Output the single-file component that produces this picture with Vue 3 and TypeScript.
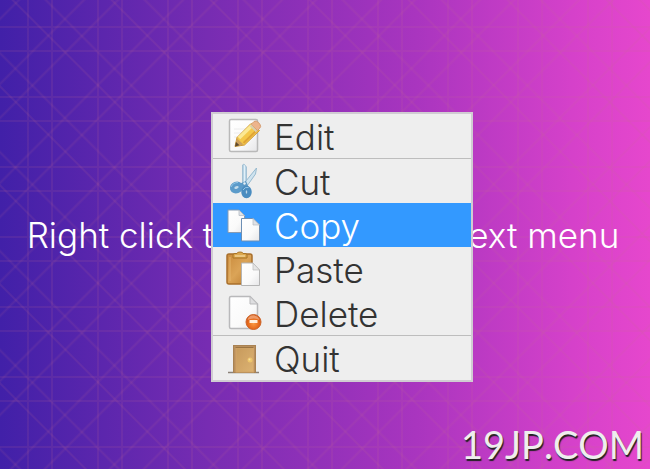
<script setup lang="ts">
import { ref } from 'vue'

type IconName = 'edit' | 'cut' | 'copy' | 'paste' | 'delete' | 'quit'

interface MenuItem {
  icon: IconName
  label: string
}

const groups: MenuItem[][] = [
  [{ icon: 'edit', label: 'Edit' }],
  [
    { icon: 'cut', label: 'Cut' },
    { icon: 'copy', label: 'Copy' },
    { icon: 'paste', label: 'Paste' },
    { icon: 'delete', label: 'Delete' },
  ],
  [{ icon: 'quit', label: 'Quit' }],
]

const active = ref<IconName>('copy')
</script>

<template>
  <main class="stage">
    <svg class="weave" aria-hidden="true">
      <defs>
        <pattern id="grid" width="70" height="70" patternUnits="userSpaceOnUse">
          <path d="M28 0V70M52 0V70M0 27H70M0 51H70" class="thread" />
        </pattern>
        <pattern id="rising" width="70" height="70" patternUnits="userSpaceOnUse" patternTransform="rotate(45)">
          <path d="M13.4 0V70M59.4 0V70" class="thread" />
        </pattern>
        <pattern id="falling" width="70" height="70" patternUnits="userSpaceOnUse" patternTransform="rotate(-45)">
          <path d="M9 0V70M32.4 0V70" class="thread" />
        </pattern>
      </defs>
      <rect width="100%" height="100%" fill="url(#grid)" />
      <rect width="100%" height="100%" fill="url(#rising)" />
      <rect width="100%" height="100%" fill="url(#falling)" />
    </svg>

    <svg class="defs" width="0" height="0" aria-hidden="true">
      <defs>
        <linearGradient id="paper" x1="0" y1="0" x2="1" y2="1">
          <stop offset="0" stop-color="#ffffff" />
          <stop offset="0.6" stop-color="#fafafa" />
          <stop offset="1" stop-color="#e6e6e8" />
        </linearGradient>
        <linearGradient id="wood" x1="0" y1="0" x2="1" y2="1">
          <stop offset="0" stop-color="#c98a3c" />
          <stop offset="0.5" stop-color="#dba457" />
          <stop offset="1" stop-color="#b97a2e" />
        </linearGradient>
        <linearGradient id="panel" x1="0" y1="0" x2="1" y2="1">
          <stop offset="0" stop-color="#c79a5c" />
          <stop offset="1" stop-color="#dcb272" />
        </linearGradient>
        <linearGradient id="steel" x1="0" y1="0" x2="1" y2="0">
          <stop offset="0" stop-color="#8db6d0" />
          <stop offset="0.5" stop-color="#e2f0f8" />
          <stop offset="1" stop-color="#8fb9d4" />
        </linearGradient>
        <radialGradient id="ember" cx="0.5" cy="0.6" r="0.6">
          <stop offset="0" stop-color="#fb9a45" />
          <stop offset="0.6" stop-color="#e66a1c" />
          <stop offset="1" stop-color="#c24d12" />
        </radialGradient>
      </defs>
    </svg>

    <p class="hint">Right click to open the context menu</p>

    <div class="menu" role="menu" aria-label="Context menu">
      <div v-for="(group, index) in groups" :key="index" class="group" role="group">
        <button
          v-for="item in group"
          :key="item.icon"
          type="button"
          role="menuitem"
          class="item"
          :class="{ active: active === item.icon }"
          @mouseenter="active = item.icon"
        >
          <svg class="icon" viewBox="0 0 36 36" aria-hidden="true">
            <g v-if="item.icon === 'edit'">
              <rect x="3.5" y="1.5" width="28" height="32" rx="1.5" fill="url(#paper)" stroke="#b9b9b9" stroke-width="1.5" />
              <path d="M8 11H24M8 15H20M8 19H17" stroke="#ececec" />
              <path d="M9 28.5L11 19.5L25 5.5L33.5 12.5L18.5 27Z" fill="#f4c84a" stroke="#cf9a38" />
              <path d="M13 20L26.5 7" stroke="#fbe994" stroke-width="3.5" />
              <path d="M17.5 25L31 12" stroke="#e0a435" stroke-width="2" />
              <path d="M25 6.5L28 3.5Q30 2 32.5 4.5L34 6.5Q35.5 8.5 33.5 10.5L31.5 12.5Z" fill="#edb48c" stroke="#d49c70" />
              <path d="M24.5 7.5L30.5 13.5" stroke="#d9cfae" stroke-width="2" />
              <path d="M9 28.5L11 20.5L17.5 26.5Z" fill="#cda15c" />
              <path d="M9 28.5L10 24L13.5 27.3Z" fill="#5d4a30" />
            </g>
            <g v-else-if="item.icon === 'cut'">
              <path d="M16.5 2L18 1L20.5 4V21L16.5 23Z" fill="url(#steel)" stroke="#9dbdd0" stroke-width="0.8" />
              <path d="M30.5 5L29.5 11L21 23L17.5 21Z" fill="#cfe3ef" stroke="#8eb4cb" stroke-width="0.9" />
              <path d="M13 21L20 18L23 25L17 27Z" fill="#5a97c4" />
              <ellipse cx="10.5" cy="24.5" rx="4.5" ry="3.5" fill="#c4dceb" stroke="#5b9bca" stroke-width="4.5" transform="rotate(-20 10.5 24.5)" />
              <ellipse cx="20.5" cy="29" rx="3" ry="4" fill="#bcd6e8" stroke="#4a8cc0" stroke-width="4.5" />
              <path d="M5 24Q7 19.5 12 19.5M17 27Q19 23.5 22.5 24.5" stroke="#93c6e6" fill="none" />
              <circle cx="18.5" cy="20.5" r="1.2" fill="#e6f2f8" />
            </g>
            <g v-else-if="item.icon === 'copy'">
              <path d="M2 3H13L18.5 8.5V25.5H2Z" fill="url(#paper)" stroke="#879bb3" />
              <path d="M13 3V8.5H18.5Z" fill="#e0e3e8" stroke="#adb5bf" stroke-width="0.7" />
              <path d="M15.5 11.5H27L33.5 18V34H15.5Z" fill="url(#paper)" stroke="#6d8fb5" />
              <path d="M27 11.5V18H33.5Z" fill="#dfe1e5" stroke="#b6bac0" stroke-width="0.7" />
            </g>
            <g v-else-if="item.icon === 'paste'">
              <rect x="1" y="3" width="25" height="30" rx="2" fill="url(#wood)" stroke="#a96f2b" stroke-width="1.5" />
              <path d="M4 6V30" stroke="#e5b56e" />
              <path d="M7 7V4Q7 2.5 9 2.5H11Q11 1 14 1Q17 1 17 2.5H19Q21 2.5 21 4V7Z" fill="#dca94f" stroke="#a97427" />
              <path d="M9 5H19" stroke="#f0d092" stroke-width="1.5" />
              <path d="M15.5 12H27L33.5 19V34.5H15.5Z" fill="url(#paper)" stroke="#b5b5b5" />
              <path d="M27 12V19H33.5Z" fill="#e5e5e5" stroke="#bcbcbc" stroke-width="0.7" />
            </g>
            <g v-else-if="item.icon === 'delete'">
              <path d="M5 1.5H24L31.5 9V32Q31.5 33.5 30 33.5H5Q3.5 33.5 3.5 32V3Q3.5 1.5 5 1.5Z" fill="url(#paper)" stroke="#b9b9bb" stroke-width="1.5" />
              <path d="M24 1.5V9H31.5Z" fill="#dedee0" stroke="#b9b9bb" />
              <circle cx="27.5" cy="27" r="7.5" fill="url(#ember)" stroke="#cf6529" />
              <path d="M21.5 25A6.2 6.2 0 0 1 33.5 25Q27.5 22 21.5 25Z" fill="#ee9a68" />
              <rect x="23.5" y="25" width="8" height="3" rx="0.5" fill="#fff0df" />
            </g>
            <g v-else>
              <path d="M2 32.5H33" stroke="#8b8178" stroke-width="1.5" />
              <rect x="7.5" y="5.5" width="22" height="27" fill="#b98f5c" stroke="#a98253" />
              <rect x="10" y="8" width="17.5" height="24" fill="url(#panel)" stroke="#d2a468" />
              <path d="M9.5 7.5H27.5" stroke="#9a7442" />
              <circle cx="24" cy="20" r="2.5" fill="#edc56b" />
              <circle cx="23.5" cy="19.5" r="1" fill="#f8dfa0" />
            </g>
          </svg>
          <span class="label">{{ item.label }}</span>
        </button>
      </div>
    </div>

    <div class="mark">19JP.COM</div>
  </main>
</template>

<style>
body {
  margin: 0;
}
</style>

<style scoped>
.stage {
  position: relative;
  display: flex;
  align-items: center;
  justify-content: center;
  box-sizing: border-box;
  min-height: 100vh;
  padding-right: 4px;
  overflow: hidden;
  font-family: Inter, 'Liberation Sans', sans-serif;
  font-weight: 300;
  font-size: 35px;
  line-height: 44px;
  background: linear-gradient(90deg, #4120a8 0%, #772cb2 32%, #a935bf 64%, #d541ca 88%, #e647cd 100%);
}

.weave {
  position: absolute;
  inset: 0;
  width: 100%;
  height: 100%;
}

.defs {
  position: absolute;
}

.thread {
  fill: none;
  stroke: rgba(200, 110, 140, 0.12);
  stroke-width: 2;
}

.hint {
  position: relative;
  margin: 0;
  color: #fff;
  white-space: nowrap;
}

.menu {
  position: absolute;
  top: 112px;
  left: 211px;
  box-sizing: border-box;
  width: 262px;
  border: 2px solid #d0ccd2;
  background: #eee;
}

.group + .group {
  border-top: 1px solid #bdbdbd;
}

.item {
  display: flex;
  align-items: center;
  gap: 12px;
  width: 100%;
  height: 44px;
  padding: 0 13px;
  border: 0;
  background: transparent;
  color: #333;
  font: inherit;
  text-align: left;
}

.item.active {
  background: #39f;
  color: #fff;
}

.icon {
  flex: none;
  width: 36px;
  height: 36px;
}

.label {
  padding-top: 2px;
}

.mark {
  position: absolute;
  right: 6px;
  bottom: 3px;
  color: #eee;
  font-family: Lato, sans-serif;
  font-weight: 400;
  font-size: 38px;
  font-kerning: none;
  text-shadow: 1px 2px 1px #222;
}
</style>
